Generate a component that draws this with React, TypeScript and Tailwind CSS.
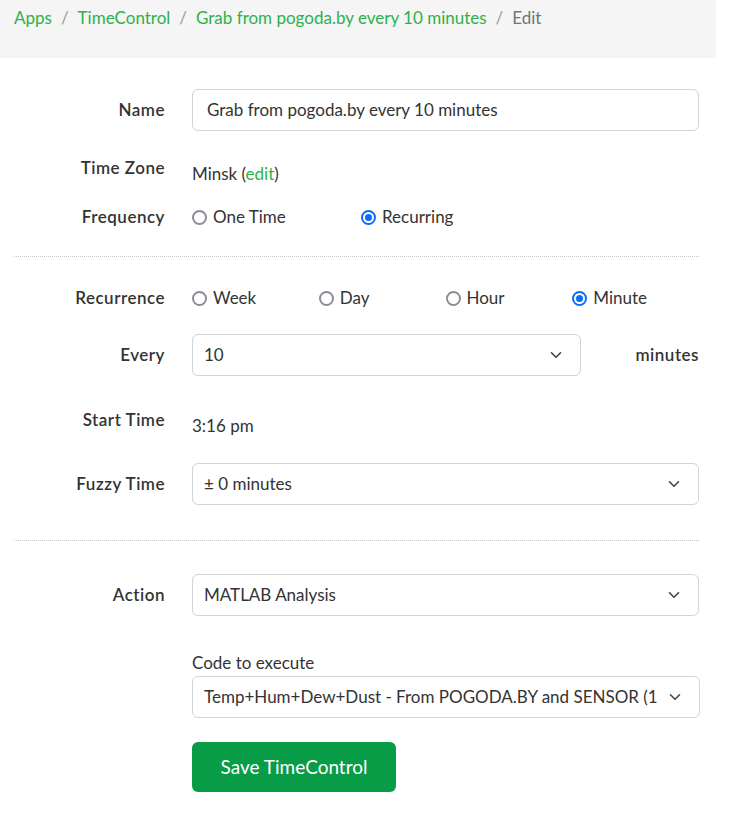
import React from "react";

// ── Small pieces ───────────────────────────────────────────────────────────

function Label({ children }: { children: React.ReactNode }) {
  return (
    <div className="w-[151px] shrink-0 text-right font-semibold leading-6 tracking-[0.5px] text-[#333]">
      {children}
    </div>
  );
}

function Radio({ label, checked }: { label: string; checked?: boolean }) {
  return (
    <span className="flex items-center gap-[6px] leading-6">
      {checked ? (
        <span className="flex h-[15px] w-[15px] items-center justify-center rounded-full border-[2px] border-[#0b6cff] bg-white">
          <span className="h-[7px] w-[7px] rounded-full bg-[#0b6cff]" />
        </span>
      ) : (
        <span className="h-[15px] w-[15px] rounded-full border-[2px] border-[#8d8c96] bg-white" />
      )}
      <span>{label}</span>
    </span>
  );
}

function Chevron() {
  return (
    <svg width="12" height="8" viewBox="0 0 12 8" fill="none" className="shrink-0">
      <path d="M1.5 1.8 6 6.2l4.5-4.4" stroke="#444" strokeWidth="1.6" strokeLinecap="round" strokeLinejoin="round" />
    </svg>
  );
}

function Select({ value, className }: { value: string; className?: string }) {
  return (
    <div
      className={
        "flex h-[42px] items-center justify-between gap-[12px] rounded-[6px] border border-[#ced4da] bg-white pl-[11px] pr-[18px] " +
        (className ?? "w-[508px]")
      }
    >
      <span className="min-w-0 overflow-hidden whitespace-nowrap">{value}</span>
      <Chevron />
    </div>
  );
}

function Rule() {
  return <div className="border-t border-dotted border-[#c8c8c8]" />;
}

// ── Page ───────────────────────────────────────────────────────────────────

export default function App() {
  return (
    <div className="h-[813px] w-[730px] overflow-hidden bg-white text-[17px] text-[#333] [font-family:Lato,'Noto_Sans',sans-serif]">
      {/* ── Breadcrumb ── */}
      <div className="flex h-[58px] w-[716px] items-start rounded-br-[4px] bg-[#f5f5f5] pl-[14px] pt-[6px] leading-6">
        <span className="text-[#2db14b]">Apps</span>
        <span className="px-[9px] text-[#9a9a9a]">/</span>
        <span className="text-[#2db14b]">TimeControl</span>
        <span className="px-[9px] text-[#9a9a9a]">/</span>
        <span className="text-[#2db14b]">Grab from pogoda.by every 10 minutes</span>
        <span className="px-[9px] text-[#9a9a9a]">/</span>
        <span className="text-[#6c757d]">Edit</span>
      </div>

      <div className="w-[699px] pl-[14px]">
        {/* ── Name ── */}
        <div className="mt-[31px] flex items-center gap-[27px]">
          <Label>Name</Label>
          <div className="flex h-[42px] w-[508px] items-center rounded-[6px] border border-[#ced4da] pl-[14px]">
            Grab from pogoda.by every 10 minutes
          </div>
        </div>

        {/* ── Time zone ── */}
        <div className="mt-[25px] flex items-start gap-[27px]">
          <Label>Time Zone</Label>
          <div className="mt-[6px] leading-6">
            Minsk (<span className="text-[#2db14b]">edit</span>)
          </div>
        </div>

        {/* ── Frequency ── */}
        <div className="mt-[19px] flex items-center gap-[27px]">
          <Label>Frequency</Label>
          <div className="grid w-[508px] grid-cols-3">
            <Radio label="One Time" />
            <Radio label="Recurring" checked />
          </div>
        </div>

        <div className="mt-[27px]">
          <Rule />
        </div>

        {/* ── Recurrence ── */}
        <div className="mt-[29px] flex items-center gap-[27px]">
          <Label>Recurrence</Label>
          <div className="grid w-[508px] grid-cols-4">
            <Radio label="Week" />
            <Radio label="Day" />
            <Radio label="Hour" />
            <Radio label="Minute" checked />
          </div>
        </div>

        {/* ── Every ── */}
        <div className="mt-[24px] flex items-center gap-[27px]">
          <Label>Every</Label>
          <div className="flex w-[508px] items-center justify-between">
            <Select value="10" className="w-[389px]" />
            <span className="font-semibold tracking-[0.5px]">minutes</span>
          </div>
        </div>

        {/* ── Start time ── */}
        <div className="mt-[32px] flex items-start gap-[27px]">
          <Label>Start Time</Label>
          <div className="mt-[6px] leading-6">3:16 pm</div>
        </div>

        {/* ── Fuzzy time ── */}
        <div className="mt-[25px] flex items-center gap-[27px]">
          <Label>Fuzzy Time</Label>
          <Select value="± 0 minutes" />
        </div>

        <div className="mt-[35px]">
          <Rule />
        </div>

        {/* ── Action ── */}
        <div className="mt-[33px] flex items-center gap-[27px]">
          <Label>Action</Label>
          <Select value="MATLAB Analysis" />
        </div>

        <div className="ml-[178px] w-[508px]">
          <div className="mt-[35px] leading-6">Code to execute</div>
          <div className="mt-[1px]">
            <Select value="Temp+Hum+Dew+Dust - From POGODA.BY and SENSOR (10 min)" />
          </div>
          <button className="mt-[24px] flex h-[50px] w-[204px] items-center justify-center rounded-[6px] bg-[#099c47] text-[19px] text-white">
            Save TimeControl
          </button>
        </div>
      </div>
    </div>
  );
}
